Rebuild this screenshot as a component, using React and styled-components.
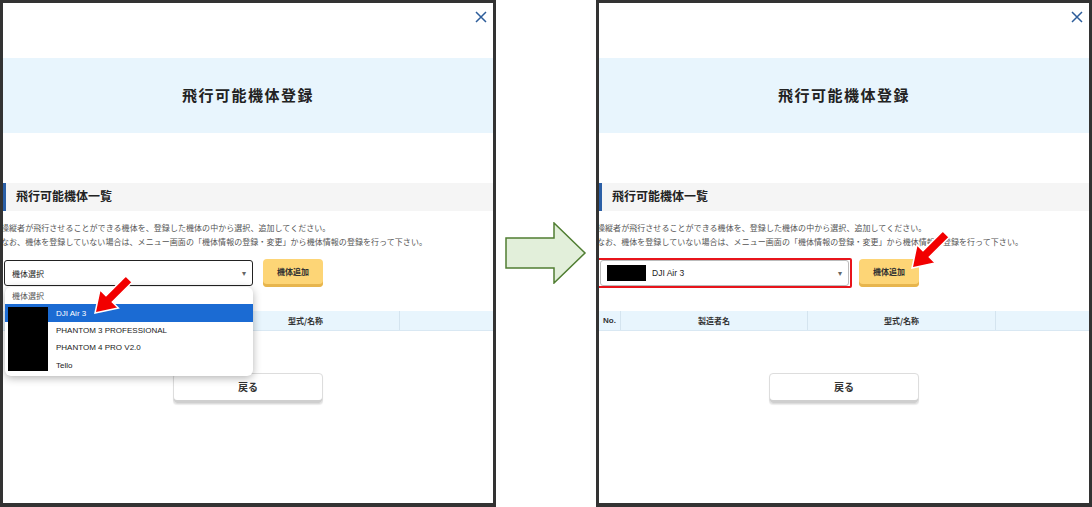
import React from "react";
import styled, { createGlobalStyle } from "styled-components";

const Global = createGlobalStyle`
  html, body { margin: 0; padding: 0; background: #fff; }
  body { font-family: "Noto Sans CJK JP", "Noto Sans", sans-serif; color: #222; }
  * { box-sizing: border-box; }
`;

const Page = styled.div`
  display: flex;
  width: 1092px;
  height: 507px;
  overflow: hidden;
`;

const Panel = styled.div`
  position: relative;
  width: 496px;
  height: 507px;
  border: 3px solid #333;
  border-bottom-width: 4px;
  background: #fff;
  display: flex;
  flex-direction: column;
  overflow: hidden;
`;

const Middle = styled.div`
  width: 100px;
  display: flex;
  align-items: flex-start;
  padding-top: 222px;
  padding-left: 9px;
`;

const TopBar = styled.div`
  height: 55px;
  display: flex;
  justify-content: flex-end;
  align-items: flex-start;
  padding: 8px 6px 0 0;
`;

const TitleBand = styled.div`
  height: 75px;
  background: #e8f5fd;
  display: flex;
  align-items: center;
  justify-content: center;
  padding-bottom: 3px;
  font-size: 15px;
  font-weight: 700;
  letter-spacing: 1.5px;
  color: #222;
`;

const SectionHeader = styled.div`
  margin-top: 50px;
  height: 28px;
  background: #f5f5f5;
  border-left: 3px solid #2b5fa6;
  display: flex;
  align-items: center;
  padding: 0 0 3px 10px;
  font-size: 12px;
  font-weight: 700;
  color: #222;
`;

const Desc = styled.div`
  margin-top: 10px;
  font-size: 8px;
  line-height: 14px;
  letter-spacing: 0.05px;
  color: #555;
  white-space: nowrap;
  margin-left: -2px;
`;

const ControlRow = styled.div`
  margin-top: 10px;
  height: 28px;
  display: flex;
  align-items: center;
  gap: 10px;
  padding-left: 1px;
`;

const SelectWrap = styled.div`
  position: relative;
  width: 249px;
  height: 26px;
`;

const SelectBox = styled.div`
  position: relative;
  width: 100%;
  height: 100%;
  border: 1px solid ${(p) => (p.$focused ? "#222" : "#bbb")};
  border-radius: 3px;
  background: #fff;
  display: flex;
  align-items: center;
  padding-left: ${(p) => (p.$hasImage ? "6px" : "7px")};
  font-size: 8px;
  color: #222;
`;

const RedFrame = styled.div`
  position: absolute;
  left: -5px;
  right: -4px;
  top: -3px;
  bottom: -3px;
  border: 2px solid #e8141b;
  border-radius: 2px;
  pointer-events: none;
`;

const SelectLabel = styled.span`
  flex: 1;
  font-family: "Liberation Sans", "Noto Sans CJK JP", sans-serif;
  font-size: ${(p) => (p.$latin ? "8.5px" : "8px")};
`;

const Caret = styled.span`
  width: 14px;
  font-size: 8px;
  color: #666;
  text-align: center;
  margin-right: 1px;
  font-family: "DejaVu Sans", sans-serif;
`;

const Redact = styled.div`
  width: ${(p) => p.$w}px;
  height: ${(p) => p.$h}px;
  background: #000;
  margin-right: 6px;
`;

const AddButton = styled.div`
  width: 60px;
  height: 28px;
  border-radius: 4px;
  background: #fdd576;
  box-shadow: inset 0 -3px 0 #e7b54d;
  display: flex;
  align-items: center;
  justify-content: center;
  font-size: 8px;
  font-weight: 700;
  color: #333;
  padding-bottom: 3px;
`;

const TableHead = styled.div`
  margin-top: 24px;
  height: 20px;
  display: grid;
  grid-template-columns: 21px 187px 188px 1fr;
  background: #e8f5fd;
  border-bottom: 1px solid #d9e8f3;
`;

const HeadCell = styled.div`
  display: flex;
  align-items: center;
  justify-content: center;
  font-size: 8px;
  font-weight: 700;
  color: #333;
  padding-bottom: 1px;
  border-left: ${(p) => (p.$first ? "none" : "1px solid #d4e4ef")};
  font-family: ${(p) => (p.$latin ? '"Liberation Sans", sans-serif' : "inherit")};
`;

const BackRow = styled.div`
  margin-top: 42px;
  display: flex;
  justify-content: center;
`;

const BackButton = styled.div`
  width: 150px;
  height: 31px;
  border: 1px solid #ddd;
  border-radius: 4px;
  background: #fff;
  box-shadow: inset 0 -3px 0 #cfcfcf, 0 1px 1px rgba(0,0,0,0.08);
  display: flex;
  align-items: center;
  justify-content: center;
  font-size: 10px;
  font-weight: 700;
  color: #333;
  padding-bottom: 5px;
`;

const Dropdown = styled.div`
  position: absolute;
  top: calc(100% + 1px);
  left: 1px;
  width: 248px;
  padding: 0 0 2px;
  background: #fff;
  border-radius: 6px;
  box-shadow: 0 2px 8px rgba(0,0,0,0.3);
  overflow: hidden;
  z-index: 5;
`;

const Option = styled.div`
  height: 17.4px;
  display: flex;
  align-items: center;
  padding-left: ${(p) => (p.$placeholder ? "7px" : "51px")};
  font-family: "Liberation Sans", "Noto Sans CJK JP", sans-serif;
  font-size: 8px;
  color: ${(p) => (p.$active ? "#fff" : p.$placeholder ? "#555" : "#222")};
  background: ${(p) => (p.$active ? "#1b6bd3" : "transparent")};
`;

const DropRedact = styled.div`
  position: absolute;
  left: 3px;
  top: 20px;
  width: 40px;
  height: 64px;
  background: #000;
`;

const PointerArrow = styled.svg`
  position: absolute;
  left: ${(p) => p.$x}px;
  top: ${(p) => p.$y}px;
  width: 50px;
  height: 50px;
  z-index: 10;
  overflow: visible;
`;

function RedArrow({ x, y }) {
  return (
    <PointerArrow $x={x} $y={y} viewBox="0 0 50 50">
      <polygon
        transform="rotate(135 25 25)"
        points="1,20.5 29,20.5 29,12 49,25 29,38 29,29.5 1,29.5"
        fill="#f20000"
        stroke="#fff"
        strokeWidth="1.5"
        strokeLinejoin="miter"
      />
    </PointerArrow>
  );
}

function CloseIcon() {
  return (
    <svg width="12" height="12" viewBox="0 0 12 12">
      <path d="M1 1 L11 11 M11 1 L1 11" stroke="#2d5d9a" strokeWidth="1.5" fill="none" />
    </svg>
  );
}

function Modal({ variant }) {
  const open = variant === "open";
  return (
    <Panel>
      <TopBar>
        <CloseIcon />
      </TopBar>
      <TitleBand>飛行可能機体登録</TitleBand>
      <SectionHeader>飛行可能機体一覧</SectionHeader>
      <Desc>
        操縦者が飛行させることができる機体を、登録した機体の中から選択、追加してください。
        <br />
        なお、機体を登録していない場合は、メニュー画面の「機体情報の登録・変更」から機体情報の登録を行って下さい。
      </Desc>
      <ControlRow>
        <SelectWrap>
          {open ? (
            <SelectBox $focused>
              <SelectLabel>機体選択</SelectLabel>
              <Caret>▾</Caret>
            </SelectBox>
          ) : (
            <SelectBox $hasImage>
              <Redact $w={39} $h={16} />
              <SelectLabel $latin>DJI Air 3</SelectLabel>
              <Caret>▾</Caret>
              <RedFrame />
            </SelectBox>
          )}
          {open && (
            <Dropdown>
              <Option $placeholder>機体選択</Option>
              <Option $active>DJI Air 3</Option>
              <Option>PHANTOM 3 PROFESSIONAL</Option>
              <Option>PHANTOM 4 PRO V2.0</Option>
              <Option>Tello</Option>
              <DropRedact />
            </Dropdown>
          )}
        </SelectWrap>
        <AddButton>機体追加</AddButton>
      </ControlRow>
      <TableHead>
        <HeadCell $first $latin>No.</HeadCell>
        <HeadCell>製造者名</HeadCell>
        <HeadCell>型式/名称</HeadCell>
        <HeadCell />
      </TableHead>
      <BackRow>
        <BackButton>戻る</BackButton>
      </BackRow>
      {open ? <RedArrow x={84} y={268} /> : <RedArrow x={305} y={223} />}
    </Panel>
  );
}

function StepArrow() {
  return (
    <svg width="82" height="62" viewBox="0 0 82 62">
      <polygon
        points="1,16 49,16 49,1 80,31 49,61 49,46 1,46"
        fill="#e2efda"
        stroke="#507e32"
        strokeWidth="1.5"
      />
    </svg>
  );
}

export default function App() {
  return (
    <>
      <Global />
      <Page>
        <Modal variant="open" />
        <Middle>
          <StepArrow />
        </Middle>
        <Modal variant="selected" />
      </Page>
    </>
  );
}
